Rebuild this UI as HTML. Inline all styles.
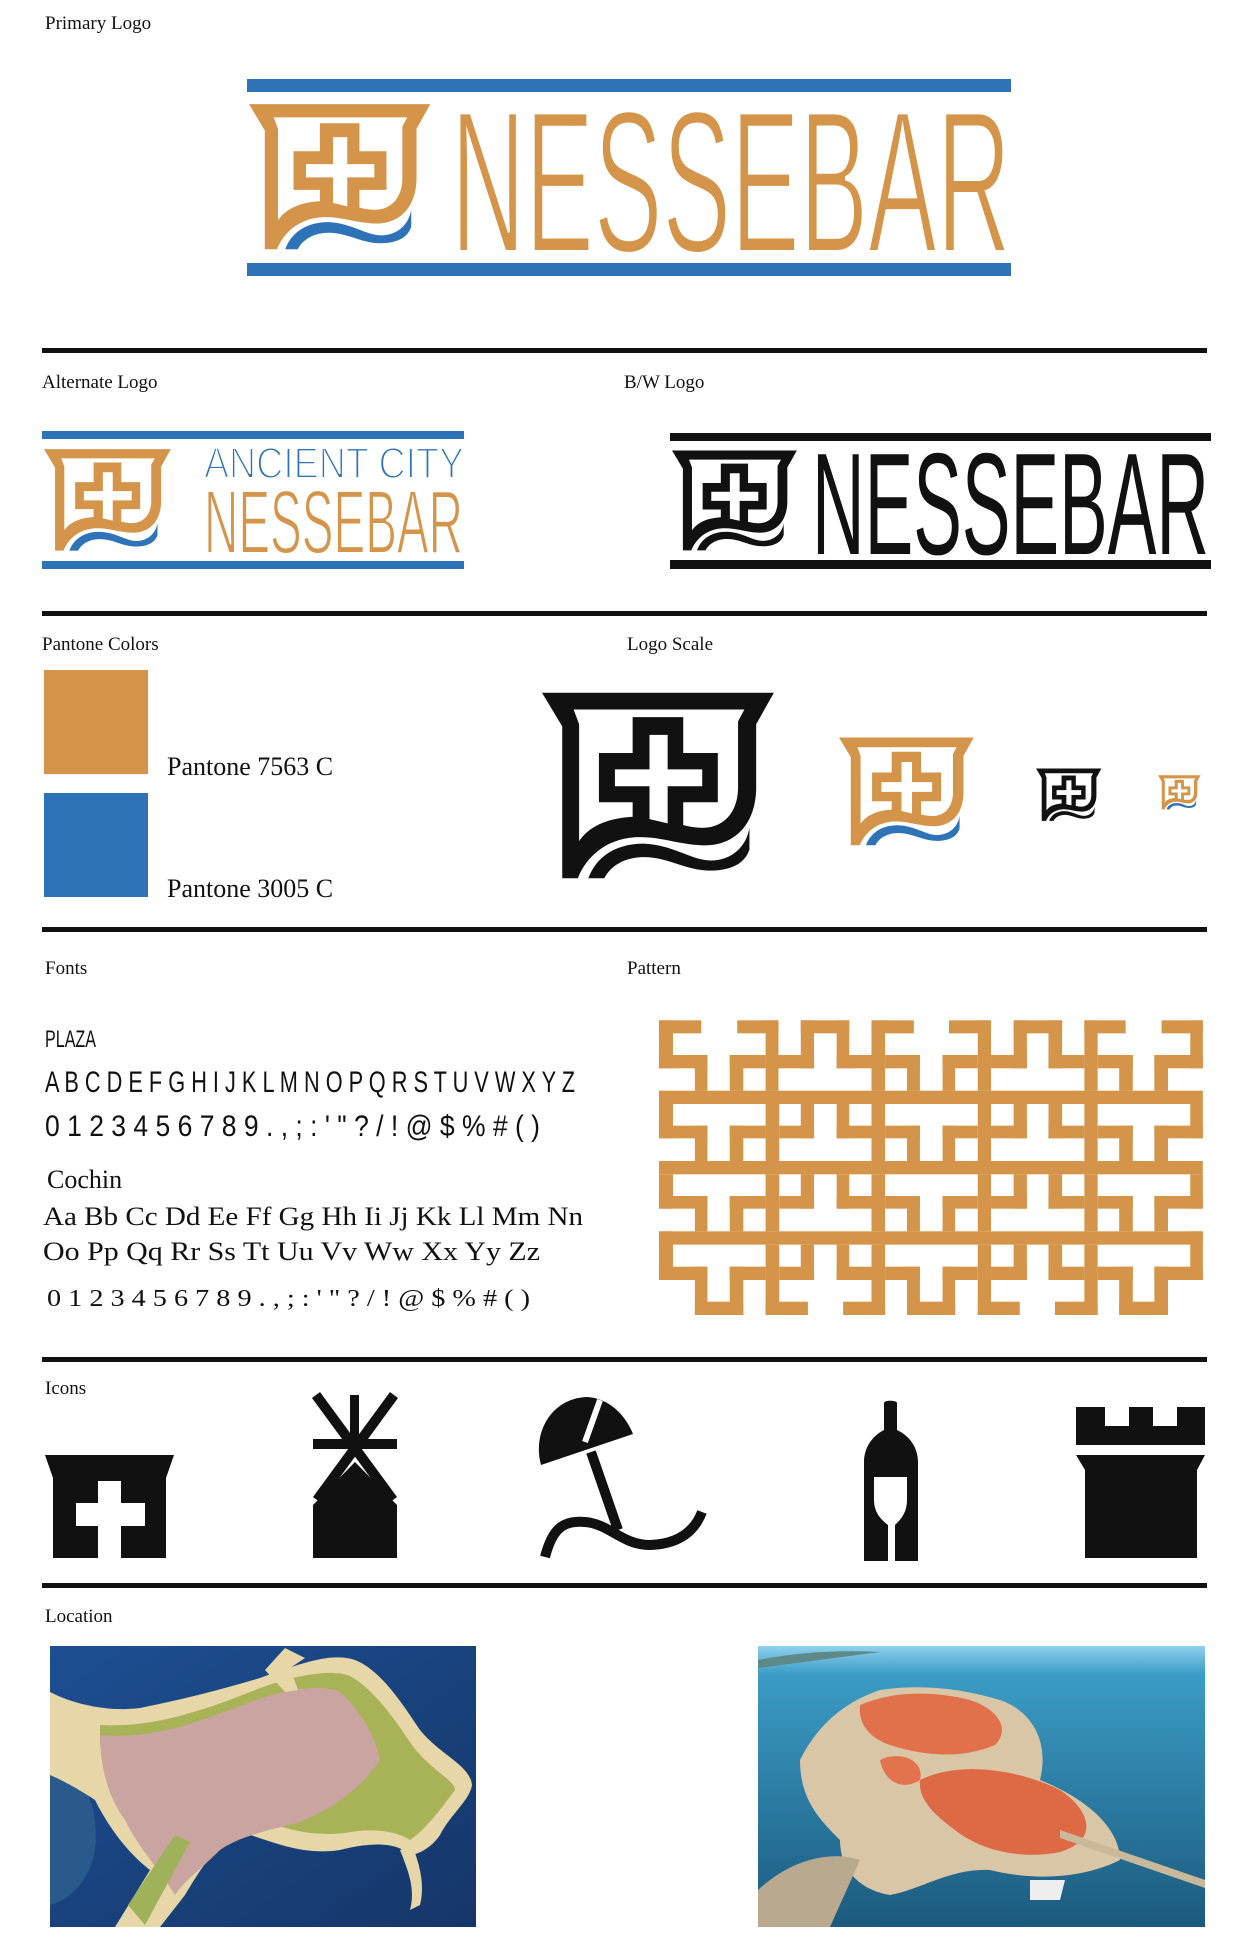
<!DOCTYPE html>
<html><head><meta charset="utf-8"><style>
html,body{margin:0;padding:0;background:#fff;}
svg{display:block}
.lbl{font-family:"Liberation Serif",serif;font-size:19px;fill:#111}
.ser{font-family:"Liberation Serif",serif;fill:#111}
.san{font-family:"Liberation Sans",sans-serif;fill:#111}
</style></head><body>
<svg width="1245" height="1952" viewBox="0 0 1245 1952" xmlns="http://www.w3.org/2000/svg">
<defs>
<symbol id="sh" viewBox="20 100 555 445">
  <path fill-rule="evenodd" fill="var(--a)" d="M20,100 H570 L528,175 V330 C525,420 470,465 400,462 C340,460 300,440 240,443 C170,448 125,490 105,540 H68 V180 Z M95,140 H500 L485,168 V330 C482,395 440,425 390,420 C340,416 310,392 240,394 C170,397 130,420 108,452 V175 Z"/>
  <path fill="var(--a)" d="M235,158 H355 V243 H437 V360 H355 V425 C330,418 300,405 235,398 V360 H155 V243 H235 Z"/>
  <path fill="#fff" d="M275,200 H318 V282 H400 V322 H318 V410 L275,400 V322 H193 V282 H275 Z"/>
  <path fill="var(--b)" d="M130,540 C150,485 200,458 260,458 C330,460 375,498 420,498 C470,498 505,465 512,420 V472 C500,510 460,522 420,522 C360,522 320,490 262,490 C215,490 182,512 168,540 Z"/>
</symbol>
</defs>

<text class="lbl" x="45" y="29">Primary Logo</text>
<text class="lbl" x="42" y="388">Alternate Logo</text>
<text class="lbl" x="624" y="388">B/W Logo</text>
<text class="lbl" x="42" y="650">Pantone Colors</text>
<text class="lbl" x="627" y="650">Logo Scale</text>
<text class="lbl" x="45" y="974">Fonts</text>
<text class="lbl" x="627" y="974">Pattern</text>
<text class="lbl" x="45" y="1394">Icons</text>
<text class="lbl" x="45" y="1622">Location</text>

<rect x="42" y="348" width="1165" height="5" fill="#111"/>
<rect x="42" y="611" width="1165" height="5" fill="#111"/>
<rect x="42" y="927" width="1165" height="5" fill="#111"/>
<rect x="42" y="1357" width="1165" height="5" fill="#111"/>
<rect x="42" y="1583" width="1165" height="5" fill="#111"/>

<rect x="247" y="79" width="764" height="13" fill="#2E72B8"/>
<rect x="247" y="263" width="764" height="13" fill="#2E72B8"/>
<use href="#sh" x="249" y="103" width="183" height="149" style="--a:#D4954A;--b:#2E72B8"/>
<text x="451" y="252" font-family="Liberation Sans,sans-serif" font-size="203" fill="#D4954A" stroke="#fff" stroke-width="4" textLength="560" lengthAdjust="spacingAndGlyphs">NESSEBAR</text>

<rect x="42" y="431" width="422" height="8" fill="#2E72B8"/>
<rect x="42" y="561" width="422" height="8" fill="#2E72B8"/>
<use href="#sh" x="44" y="448" width="128" height="105" style="--a:#D4954A;--b:#2E72B8"/>
<text x="204" y="478" font-family="Liberation Sans,sans-serif" font-size="44" fill="#2E72B8" stroke="#fff" stroke-width="2" textLength="260" lengthAdjust="spacingAndGlyphs">ANCIENT CITY</text>
<text x="204" y="553" font-family="Liberation Sans,sans-serif" font-size="90" fill="#D4954A" stroke="#fff" stroke-width="2" textLength="259" lengthAdjust="spacingAndGlyphs">NESSEBAR</text>

<rect x="670" y="433" width="541" height="8" fill="#111"/>
<rect x="670" y="560" width="541" height="9" fill="#111"/>
<use href="#sh" x="672" y="448" width="126" height="106" style="--a:#111;--b:#111"/>
<text x="812" y="554" font-family="Liberation Sans,sans-serif" font-size="145" fill="#111" textLength="397" lengthAdjust="spacingAndGlyphs">NESSEBAR</text>

<rect x="44" y="670" width="104" height="104" fill="#D4954A"/>
<rect x="44" y="793" width="104" height="104" fill="#2E72B8"/>
<text class="ser" x="167" y="775" font-size="26">Pantone 7563 C</text>
<text class="ser" x="167" y="897" font-size="26">Pantone 3005 C</text>

<use href="#sh" x="542" y="692" width="234" height="189" style="--a:#111;--b:#111"/>
<use href="#sh" x="839" y="737" width="136" height="110" style="--a:#D4954A;--b:#2E72B8"/>
<use href="#sh" x="1036" y="768" width="66" height="54" style="--a:#111;--b:#111"/>
<use href="#sh" x="1158" y="774" width="43" height="37" style="--a:#D4954A;--b:#2E72B8"/>

<text class="san" x="45" y="1047" font-size="24" textLength="51" lengthAdjust="spacingAndGlyphs">PLAZA</text>
<text class="san" x="45" y="1092" font-size="30" textLength="530" lengthAdjust="spacingAndGlyphs">A B C D E F G H I J K L M N O P Q R S T U V W X Y Z</text>
<text class="san" x="45" y="1136" font-size="30" textLength="495" lengthAdjust="spacingAndGlyphs">0 1 2 3 4 5 6 7 8 9 . , ; : ' " ? / ! @ $ % # ( )</text>
<text class="ser" x="47" y="1188" font-size="26">Cochin</text>
<text class="ser" x="43" y="1225" font-size="26" textLength="540" lengthAdjust="spacingAndGlyphs">Aa Bb Cc Dd Ee Ff Gg Hh Ii Jj Kk Ll Mm Nn</text>
<text class="ser" x="43" y="1260" font-size="26" textLength="497" lengthAdjust="spacingAndGlyphs">Oo Pp Qq Rr Ss Tt Uu Vv Ww Xx Yy Zz</text>
<text class="ser" x="47" y="1306" font-size="24" textLength="483" lengthAdjust="spacingAndGlyphs">0 1 2 3 4 5 6 7 8 9 . , ; : ' " ? / ! @ $ % # ( )</text>

<svg x="650" y="1010" width="560" height="320" viewBox="0 0 1560 960" preserveAspectRatio="none">
<g fill="#D4954A">
  <rect x="25" y="242" width="1515" height="40"/>
  <rect x="25" y="453" width="1515" height="40"/>
  <rect x="25" y="664" width="1515" height="40"/>
  <rect x="25" y="31" width="39" height="144"/><rect x="25" y="31" width="118" height="39"/>
  <rect x="25" y="135" width="135" height="40"/><rect x="125" y="135" width="35" height="107"/>
  <rect x="243" y="31" width="115" height="39"/><rect x="322" y="31" width="36" height="211"/>
  <rect x="222" y="135" width="100" height="40"/><rect x="222" y="135" width="38" height="107"/>
  <rect x="358" y="135" width="99" height="40"/><rect x="420" y="31" width="135" height="39"/>
  <rect x="420" y="31" width="37" height="144"/><rect x="520" y="31" width="35" height="144"/>
  <rect x="520" y="135" width="97" height="40"/>
  <rect x="617" y="31" width="38" height="211"/><rect x="617" y="31" width="118" height="39"/>
  <rect x="655" y="135" width="97" height="40"/><rect x="716" y="135" width="36" height="107"/>
  <rect x="833" y="31" width="117" height="39"/><rect x="913" y="31" width="37" height="211"/>
  <rect x="815" y="135" width="98" height="40"/><rect x="815" y="135" width="35" height="107"/>
  <rect x="950" y="135" width="100" height="40"/><rect x="1013" y="31" width="135" height="39"/>
  <rect x="1013" y="31" width="37" height="144"/><rect x="1110" y="31" width="38" height="144"/>
  <rect x="1110" y="135" width="100" height="40"/>
  <rect x="1210" y="31" width="37" height="211"/><rect x="1210" y="31" width="115" height="39"/>
  <rect x="1247" y="135" width="98" height="40"/><rect x="1307" y="135" width="38" height="107"/>
  <rect x="1405" y="135" width="135" height="40"/><rect x="1405" y="135" width="38" height="107"/>
  <rect x="1425" y="31" width="115" height="39"/><rect x="1505" y="31" width="35" height="144"/>
  <g id="mb">
  <rect x="25" y="282" width="39" height="103"/><rect x="25" y="347" width="135" height="38"/>
  <rect x="125" y="347" width="35" height="106"/>
  <rect x="222" y="347" width="100" height="38"/><rect x="222" y="347" width="38" height="106"/>
  <rect x="322" y="282" width="38" height="171"/>
  <rect x="360" y="347" width="97" height="38"/><rect x="420" y="282" width="37" height="103"/>
  <rect x="520" y="282" width="35" height="103"/><rect x="520" y="347" width="97" height="38"/>
  <rect x="617" y="282" width="38" height="171"/>
  <rect x="655" y="347" width="97" height="38"/><rect x="716" y="347" width="36" height="106"/>
  <rect x="815" y="347" width="98" height="38"/><rect x="815" y="347" width="35" height="106"/>
  <rect x="913" y="282" width="37" height="171"/>
  <rect x="950" y="347" width="100" height="38"/><rect x="1013" y="282" width="37" height="103"/>
  <rect x="1110" y="282" width="38" height="103"/><rect x="1110" y="347" width="100" height="38"/>
  <rect x="1210" y="282" width="37" height="171"/>
  <rect x="1247" y="347" width="98" height="38"/><rect x="1307" y="347" width="38" height="106"/>
  <rect x="1405" y="347" width="135" height="38"/><rect x="1405" y="347" width="38" height="106"/>
  <rect x="1505" y="282" width="35" height="103"/>
  </g>
  <use href="#mb" y="211"/>
  <rect x="25" y="664" width="39" height="146"/><rect x="25" y="770" width="135" height="40"/>
  <rect x="125" y="770" width="35" height="145"/><rect x="125" y="875" width="135" height="40"/>
  <rect x="222" y="770" width="38" height="145"/><rect x="222" y="770" width="100" height="40"/>
  <rect x="322" y="704" width="38" height="211"/><rect x="322" y="875" width="118" height="40"/>
  <rect x="360" y="770" width="97" height="40"/><rect x="420" y="704" width="37" height="106"/>
  <rect x="520" y="704" width="35" height="106"/><rect x="520" y="770" width="97" height="40"/>
  <rect x="617" y="704" width="38" height="211"/><rect x="538" y="875" width="117" height="40"/>
  <rect x="655" y="770" width="97" height="40"/><rect x="716" y="770" width="36" height="145"/>
  <rect x="716" y="875" width="134" height="40"/><rect x="815" y="770" width="35" height="145"/>
  <rect x="815" y="770" width="98" height="40"/>
  <rect x="913" y="704" width="37" height="211"/><rect x="913" y="875" width="117" height="40"/>
  <rect x="950" y="770" width="100" height="40"/><rect x="1013" y="704" width="37" height="106"/>
  <rect x="1110" y="704" width="38" height="106"/><rect x="1110" y="770" width="100" height="40"/>
  <rect x="1210" y="704" width="37" height="211"/><rect x="1128" y="875" width="119" height="40"/>
  <rect x="1247" y="770" width="98" height="40"/><rect x="1307" y="770" width="38" height="145"/>
  <rect x="1307" y="875" width="136" height="40"/><rect x="1405" y="770" width="38" height="145"/>
  <rect x="1405" y="770" width="135" height="40"/><rect x="1505" y="664" width="35" height="146"/>
</g>
</svg>

<path fill="#111" d="M45,1455 H174 L166,1478 V1558 H53 V1478 Z"/>
<rect x="98" y="1481" width="23" height="77" fill="#fff"/>
<rect x="76" y="1503" width="69" height="23" fill="#fff"/>

<g fill="#111">
  <rect x="350" y="1395" width="9" height="48"/>
  <rect x="313" y="1439" width="84" height="10"/>
  <path d="M355,1462 L397,1505 V1558 H313 V1505 Z"/>
</g>
<g stroke="#111" stroke-width="10" fill="none">
  <line x1="316" y1="1395" x2="393" y2="1500"/>
  <line x1="394" y1="1395" x2="317" y2="1500"/>
</g>

<path fill="#111" d="M541,1465 C532,1432 552,1398 587,1397 C608,1398 625,1414 633,1434 Z"/>
<path fill="none" stroke="#111" stroke-width="10" d="M591,1452 L618,1530"/>
<path fill="none" stroke="#111" stroke-width="10" d="M545,1557 C552,1530 562,1520 585,1522 C610,1524 622,1545 650,1545 C680,1544 695,1530 702,1512"/>
<path fill="none" stroke="#fff" stroke-width="6" d="M585,1442 L600,1400"/>

<path fill="#111" d="M884,1403 C884,1400 897,1400 897,1403 V1430 C910,1436 918,1448 918,1462 V1561 H864 V1462 C864,1448 872,1436 884,1430 Z"/>
<path fill="#fff" d="M874,1477 H907 V1500 C907,1514 899,1521 895,1525 V1561 H888 V1525 C883,1521 874,1514 874,1500 Z"/>

<g fill="#111">
  <path d="M1076,1407 H1105 V1426 H1129 V1407 H1153 V1426 H1177 V1407 H1205 V1445 H1076 Z"/>
  <path d="M1076,1455 H1205 L1197,1470 V1558 H1085 V1470 Z"/>
</g>

<defs>
<linearGradient id="mg" x1="0" y1="0" x2="1" y2="1"><stop offset="0" stop-color="#1d4f92"/><stop offset="1" stop-color="#153669"/></linearGradient>
<linearGradient id="pg" x1="0" y1="0" x2="0" y2="1"><stop offset="0" stop-color="#8fd0ee"/><stop offset="0.1" stop-color="#3b9cc6"/><stop offset="1" stop-color="#1c5a7e"/></linearGradient>
</defs>
<rect x="50" y="1646" width="426" height="281" fill="url(#mg)"/>
<path fill="#2a5a8c" d="M50,1760 C80,1770 100,1800 95,1850 C90,1880 70,1900 50,1905 Z"/>
<path fill="#e6d6a8" d="M50,1692 C75,1705 110,1712 140,1708 C180,1700 220,1690 260,1678 C300,1664 330,1652 355,1660 C380,1670 400,1700 420,1730 C440,1755 470,1765 472,1785 C470,1800 450,1815 440,1835 C430,1850 415,1855 410,1855 C400,1845 380,1840 340,1850 C300,1856 270,1840 240,1832 C215,1845 200,1870 185,1895 L160,1927 H115 L150,1870 C130,1855 110,1830 95,1800 C80,1790 62,1780 50,1775 Z"/>
<path fill="#a8b358" d="M100,1725 C150,1728 200,1712 250,1692 C290,1676 330,1668 350,1676 C375,1690 395,1720 412,1745 C430,1770 455,1780 455,1790 C440,1810 425,1830 410,1840 C395,1830 370,1828 345,1833 C300,1838 270,1822 245,1815 C200,1790 150,1760 100,1745 Z"/>
<path fill="#c9a4a0" d="M100,1735 C150,1740 200,1722 250,1702 C290,1688 320,1684 340,1692 C360,1710 375,1735 380,1760 C360,1790 330,1810 300,1822 C270,1830 240,1836 220,1850 C200,1870 185,1880 175,1895 C160,1870 140,1850 125,1820 C110,1800 100,1770 100,1735 Z"/>
<path fill="#e6d6a8" d="M265,1670 L285,1648 L305,1658 L290,1668 L298,1690 L285,1692 Z"/>
<path fill="#9fb25a" d="M128,1905 L175,1835 L190,1842 L145,1925 Z"/>
<path fill="#e6d6a8" d="M400,1850 C410,1875 415,1890 410,1910 L420,1905 C425,1885 420,1865 412,1845 Z"/>

<rect x="758" y="1646" width="447" height="281" fill="url(#pg)"/>
<path fill="#5d8a88" d="M758,1660 C800,1652 840,1650 880,1652 L758,1668 Z"/>
<path fill="#d9c6a6" d="M800,1760 C820,1720 850,1700 880,1690 C920,1684 960,1688 1000,1700 C1030,1710 1050,1740 1040,1780 C1090,1800 1120,1830 1120,1860 C1080,1880 1030,1880 990,1870 C950,1868 920,1890 890,1895 C860,1890 840,1870 840,1840 C820,1820 800,1800 800,1760 Z"/>
<path fill="#e0714a" d="M860,1705 C890,1692 930,1690 970,1700 C1000,1710 1010,1730 995,1745 C960,1760 920,1755 890,1745 C870,1738 858,1725 860,1705 Z"/>
<path fill="#dd6a45" d="M920,1780 C960,1760 1020,1770 1060,1790 C1090,1810 1100,1840 1060,1852 C1020,1860 980,1850 955,1830 C935,1815 918,1800 920,1780 Z"/>
<path fill="#e2734c" d="M880,1760 C900,1750 925,1760 920,1780 C905,1790 885,1785 880,1760 Z"/>
<path fill="#b9a98e" d="M758,1890 C790,1860 830,1850 860,1860 L830,1927 H758 Z"/>
<path fill="#eeeeee" d="M1030,1880 L1065,1880 L1060,1900 L1030,1900 Z"/>
<path fill="#c9b99a" d="M1060,1830 L1205,1880 L1205,1888 L1060,1838 Z"/>
</svg>
</body></html>
